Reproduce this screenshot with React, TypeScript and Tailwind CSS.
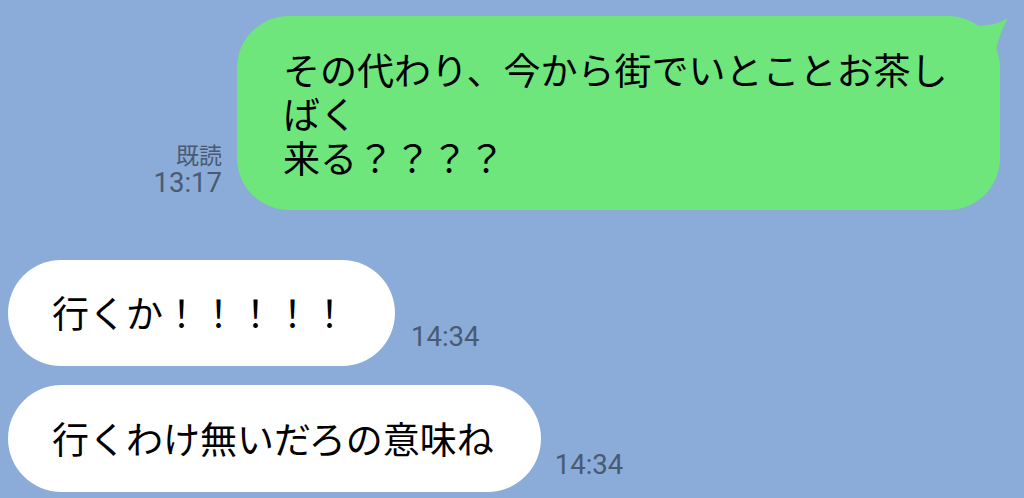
import React from 'react';

const jp = { fontFamily: '"Noto Sans CJK JP", "Noto Sans", sans-serif' };
const num = { fontFamily: 'Roboto, "Noto Sans", sans-serif' };

const Time = ({ children }: { children: React.ReactNode }) => (
  <span className="text-[27.5px] leading-[30px] text-[#4a5a72]" style={num}>
    {children}
  </span>
);

const App = () => {
  return (
    <div className="w-[1024px] h-[498px] overflow-hidden bg-[#8babd9] pt-4 flex flex-col" style={jp}>
      {/* sent message */}
      <div className="flex justify-end items-end gap-[15px] pr-6">
        <div className="flex flex-col items-end pb-[12px]">
          <span className="text-[23px] leading-[27px] text-[#4a5a72]" style={jp}>既読</span>
          <Time>13:17</Time>
        </div>
        <div className="relative w-[763px] rounded-[52px] bg-[#6ee67b] px-[46px] py-[31px] text-[37px] leading-[44px] text-black">
          <div>その代わり、今から街でいとことお茶しばく</div>
          <div>来る？？？？</div>
          <svg className="absolute right-[-15px] top-[-6px]" width="55" height="40" viewBox="0 0 55 40">
            <path d="M10 16 Q35 17 48 8 Q40 22 36 40 L10 40 Z" fill="#6ee67b" />
          </svg>
        </div>
      </div>

      {/* received */}
      <div className="mt-[50px] pl-2 flex items-end gap-4">
        <div className="h-[106px] rounded-full bg-white pl-[44px] pr-[47px] flex items-center text-[37px] text-black">
          行くか！！！！！
        </div>
        <div className="pb-[14px]">
          <Time>14:34</Time>
        </div>
      </div>

      <div className="mt-[19px] pl-2 flex items-end gap-[14px]">
        <div className="h-[107px] rounded-full bg-white pl-[44px] pr-[47px] flex items-center text-[37px] text-black">
          行くわけ無いだろの意味ね
        </div>
        <div className="pb-[12px]">
          <Time>14:34</Time>
        </div>
      </div>
    </div>
  );
};

export default App;
